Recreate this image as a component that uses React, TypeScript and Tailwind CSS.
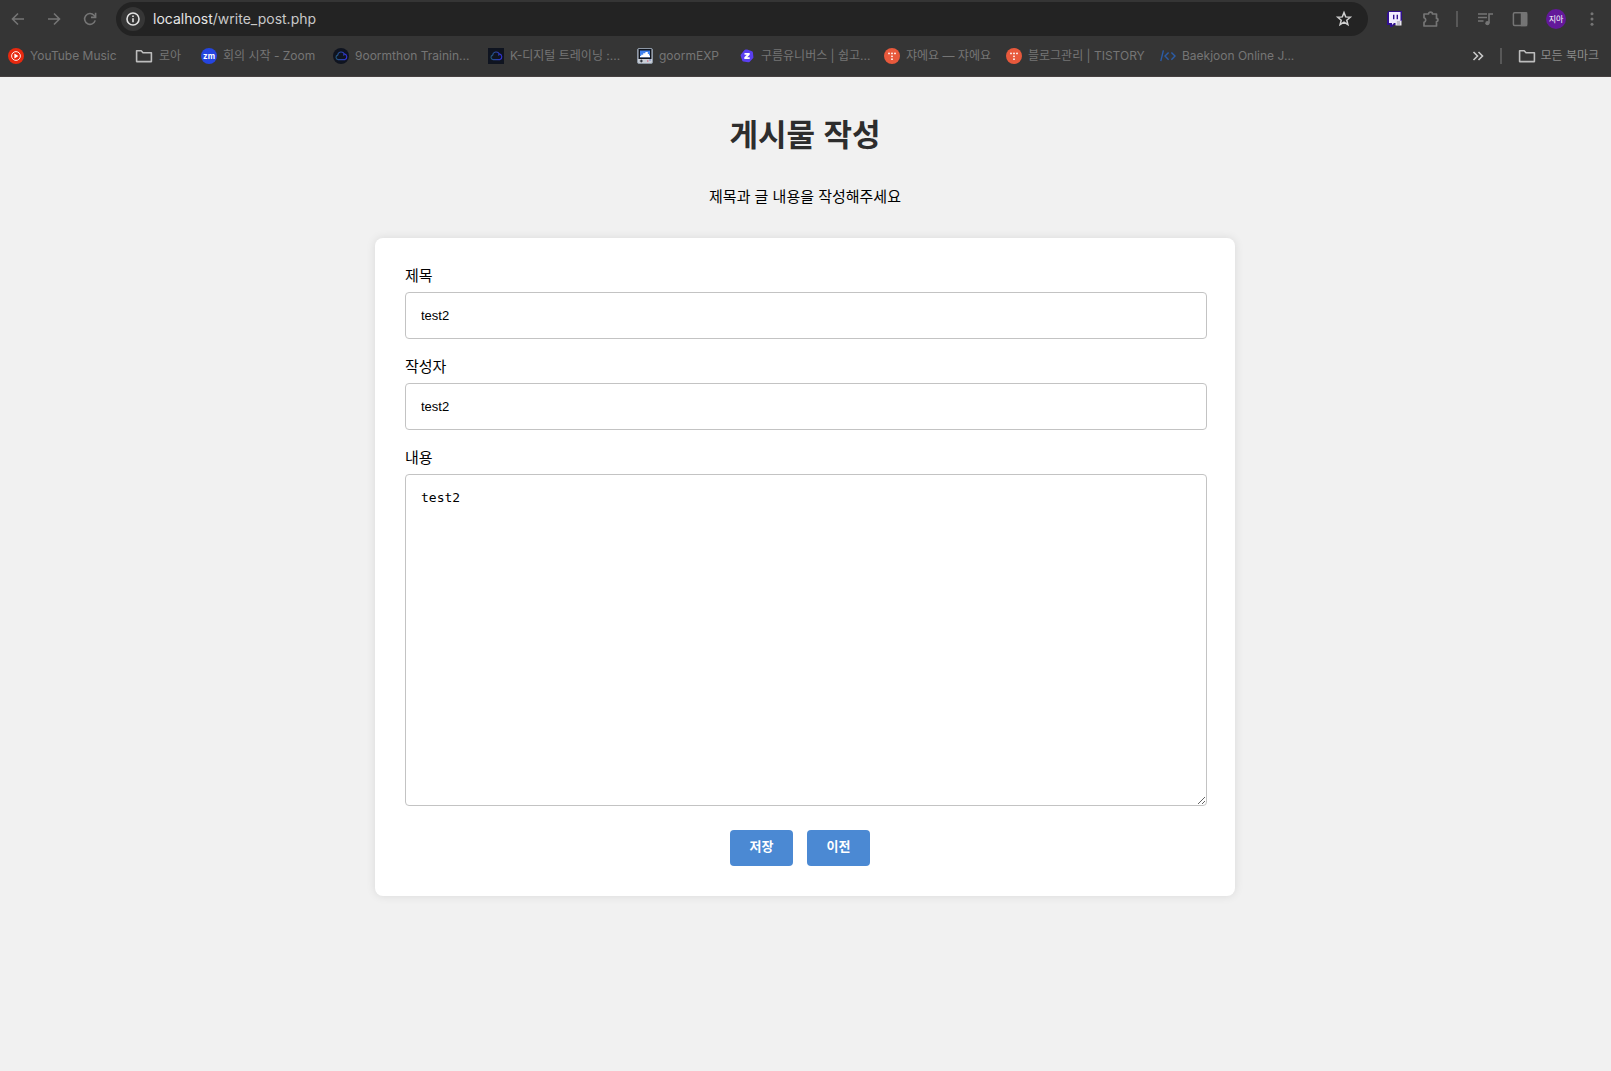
import type { ReactNode } from "react";

const uiFont = 'font-[Inter,"Noto_Sans_CJK_KR",sans-serif]';

function BackIcon() {
  return (
    <svg viewBox="0 0 16 16" className="size-4" fill="none" stroke="currentColor" strokeWidth="1.6">
      <path d="M14 8H3M8 2.5 2.5 8 8 13.5" />
    </svg>
  );
}

function ForwardIcon() {
  return (
    <svg viewBox="0 0 16 16" className="size-4" fill="none" stroke="currentColor" strokeWidth="1.6">
      <path d="M2 8h11M8 2.5 13.5 8 8 13.5" />
    </svg>
  );
}

function ReloadIcon() {
  return (
    <svg viewBox="0 0 16 16" className="size-4" fill="none" stroke="currentColor" strokeWidth="1.6">
      <path d="M13.2 9.4A5.4 5.4 0 1 1 12 4.3L13.4 6" />
      <path d="M13.6 1.8v4.6H9" />
    </svg>
  );
}

function InfoIcon() {
  return (
    <svg viewBox="0 0 16 16" className="size-4" fill="none" stroke="#e3e3e3" strokeWidth="1.6">
      <circle cx="8" cy="8" r="6" />
      <path d="M8 7.2v4M8 4.4v1.7" />
    </svg>
  );
}

function StarIcon() {
  return (
    <svg viewBox="0 0 18 18" className="size-[18px]" fill="none" stroke="#d0d0d0" strokeWidth="1.5" strokeLinejoin="miter">
      <path d="m9 2.6 1.7 4.3 4.6.3-3.5 3 1.1 4.5L9 12.2l-3.9 2.5 1.1-4.5-3.5-3 4.6-.3z" />
    </svg>
  );
}

function TwitchIcon() {
  return (
    <svg viewBox="0 0 16 16" className="size-4">
      <path d="M1 2.5 2.5 0H16v10l-5 4H8l-2 2H4v-2H1z" fill="#31108f" />
      <path d="M3 1h11.5v8l-3 3H8l-2 2v-2H3z" fill="#f1edff" />
      <path d="M7 3.8h1.4v4.4H7zM10.6 3.8H12v4.4h-1.4z" fill="#31108f" />
      <path d="M9.5 9.5h6v5h-6z" fill="#e8e6ee" />
      <path d="M11 11h3M11 13h3" stroke="#9b96ad" />
    </svg>
  );
}

function PuzzleIcon() {
  return (
    <svg viewBox="0 0 18 18" className="size-[18px]" fill="none" stroke="currentColor" strokeWidth="1.7" strokeLinejoin="round">
      <path d="M2 4h4.5a2 1.9 0 0 1 4 0H14.5v4.4a1.5 1.6 0 0 1 0 3.2V16H2v-3.6a2.4 2.4 0 0 0 0-4.6z" />
    </svg>
  );
}

function QueueIcon() {
  return (
    <svg viewBox="0 0 18 18" className="size-[18px]" fill="none" stroke="currentColor" strokeWidth="1.6">
      <path d="M2 4h9M2 7.5h9M2 11h5.5M13 13V4h4" />
      <circle cx="11.4" cy="13.2" r="2.1" fill="currentColor" stroke="none" />
    </svg>
  );
}

function SidePanelIcon() {
  return (
    <svg viewBox="0 0 16 16" className="size-4" fill="none" stroke="currentColor" strokeWidth="1.5">
      <rect x="1.4" y="1.8" width="13.2" height="12.6" rx="1.2" />
      <path d="M9.5 2h5v12.4h-5z" fill="currentColor" />
    </svg>
  );
}

function MoreIcon() {
  return (
    <svg viewBox="0 0 16 16" className="size-4" fill="currentColor">
      <circle cx="8" cy="2.8" r="1.5" />
      <circle cx="8" cy="8" r="1.5" />
      <circle cx="8" cy="13.2" r="1.5" />
    </svg>
  );
}

function FolderIcon() {
  return (
    <svg viewBox="0 0 18 16" className="h-4 w-[18px]" fill="none" stroke="#bdbdbd" strokeWidth="1.6" strokeLinejoin="round">
      <path d="M1.6 2.8h4.6l1.8 2h8.4v8.8H1.6z" />
    </svg>
  );
}

function YouTubeMusicIcon() {
  return (
    <svg viewBox="0 0 16 16" className="size-4">
      <circle cx="8" cy="8" r="8" fill="#e8290f" />
      <circle cx="8" cy="8" r="4.4" fill="none" stroke="#fff" strokeWidth="0.9" />
      <path d="M6.4 5.6 10.4 8l-4 2.4z" fill="#fff" />
    </svg>
  );
}

function ZoomIcon() {
  return (
    <span className="flex size-4 items-center justify-center rounded-full bg-[#2545e0] text-[8px] leading-none font-bold text-white">
      zm
    </span>
  );
}

function CloudIcon({ round }: { round?: boolean }) {
  return (
    <svg viewBox="0 0 16 16" className="size-4" fill="none">
      <defs>
        <linearGradient id="cloud" x1="0" x2="1">
          <stop offset="0" stopColor="#235878" />
          <stop offset="1" stopColor="#3230d8" />
        </linearGradient>
      </defs>
      <rect width="16" height="16" rx={round ? 8 : 0} fill="#0f1420" />
      <path
        d="M5 11.6a2.3 2.3 0 0 1-.3-4.5 3.5 3.5 0 0 1 6.6-1.2 3 3 0 0 1 .7 5.7H5M11 5.6l-.4 2"
        stroke="url(#cloud)"
        strokeWidth="1.1"
      />
    </svg>
  );
}

function GoormExpIcon() {
  return (
    <svg viewBox="0 0 16 16" className="size-4">
      <rect x="0.5" y="0.5" width="15" height="15" rx="1.5" fill="#c9ced6" stroke="#8d97a5" />
      <path d="M1.5 1h13v10h-13z" fill="#10151f" />
      <path d="M3 2.5h10v6.8H3z" fill="#3f82f0" />
      <path d="M3 9.3V8h1.2V6.8h2V5.2h2.2V4h2.4v2H12v1.5h1v1.8z" fill="#fff" />
      <path d="M2.8 13h3M4.3 11.6v2.8" stroke="#20242c" />
      <path d="M10 13h1.4" stroke="#d34060" />
      <path d="M12.4 12h1.3" stroke="#4060d0" />
    </svg>
  );
}

function ZepIcon() {
  return (
    <svg viewBox="0 0 16 16" className="size-4">
      <path
        d="M8.2 1.4 13 3.2a1.5 1.5 0 0 1 .9 1.2l.5 4.6a1.6 1.6 0 0 1-.4 1.3l-3.5 3.6a1.6 1.6 0 0 1-1.4.4l-4.7-.8a1.6 1.6 0 0 1-1.2-1L1.7 8a1.6 1.6 0 0 1 .2-1.4l3.4-4.4a1.8 1.8 0 0 1 1.6-.8z"
        fill="#5a3ff0"
      />
      <path d="M5.5 5h5.2v1.7L8.2 9.3h2.5V11H5.3V9.3l2.5-2.6H5.5z" fill="#fff" />
    </svg>
  );
}

function TistoryIcon() {
  return (
    <svg viewBox="0 0 16 16" className="size-4">
      <circle cx="8" cy="8" r="8" fill="#e8593c" />
      <g fill="#fff">
        <circle cx="5" cy="5.4" r="0.9" />
        <circle cx="8" cy="5.4" r="0.9" />
        <circle cx="11" cy="5.4" r="0.9" />
        <circle cx="8" cy="8.3" r="0.9" />
        <circle cx="8" cy="11.2" r="0.9" />
      </g>
    </svg>
  );
}

function BaekjoonIcon() {
  return (
    <svg viewBox="0 0 16 16" className="size-4" fill="none" stroke="#2b5ca6" strokeWidth="1.4">
      <path d="M3.4 2.4.8 13.2M8.6 4.4 5 8l3.6 3.8M11.4 4.4 15 8l-3.6 3.8" />
    </svg>
  );
}

type Bookmark = { label: string; icon: ReactNode; width: string };

const bookmarks: Bookmark[] = [
  { label: "YouTube Music", icon: <YouTubeMusicIcon />, width: "w-[127px]" },
  { label: "로아", icon: <FolderIcon />, width: "w-[66px]" },
  { label: "회의 시작 - Zoom", icon: <ZoomIcon />, width: "w-[132px]" },
  { label: "9oormthon Trainin...", icon: <CloudIcon round />, width: "w-[155px]" },
  { label: "K-디지털 트레이닝 :...", icon: <CloudIcon />, width: "w-[149px]" },
  { label: "goormEXP", icon: <GoormExpIcon />, width: "w-[102px]" },
  { label: "구름유니버스 | 쉽고...", icon: <ZepIcon />, width: "w-[145px]" },
  { label: "쟈에요 — 쟈에요", icon: <TistoryIcon />, width: "w-[122px]" },
  { label: "블로그관리 | TISTORY", icon: <TistoryIcon />, width: "w-[154px]" },
  { label: "Baekjoon Online J...", icon: <BaekjoonIcon />, width: "w-[134px]" },
];

function BrowserBar() {
  return (
    <header className={`${uiFont} border-b border-[#454040] bg-[#353535] pt-0.5 text-[#757575]`}>
      <div className="flex h-[34px] items-center">
        <div className="flex w-[116px] items-center gap-5 pl-2.5">
          <button type="button" aria-label="Back"><BackIcon /></button>
          <button type="button" aria-label="Forward"><ForwardIcon /></button>
          <button type="button" aria-label="Reload"><ReloadIcon /></button>
        </div>
        <div className="flex h-full min-w-0 flex-1 items-center gap-2 rounded-full bg-[#232323] pr-[15px] pl-[5px]">
          <button type="button" aria-label="Site information" className="flex size-6 items-center justify-center rounded-full bg-[#363636]">
            <InfoIcon />
          </button>
          <p className="flex-1 text-sm text-[#c9c9c9]">
            <span className="text-[#e6e6e6]">localhost</span>/write_post.php
          </p>
          <button type="button" aria-label="Bookmark this page"><StarIcon /></button>
        </div>
        <div className="flex items-center pr-[11px] pl-[18px]">
          <button type="button" aria-label="Twitch extension"><TwitchIcon /></button>
          <button type="button" aria-label="Extensions" className="ml-5"><PuzzleIcon /></button>
          <span className="ml-4 h-4 w-0.5 bg-[#585858]" />
          <button type="button" aria-label="Media controls" className="ml-[18px]"><QueueIcon /></button>
          <button type="button" aria-label="Side panel" className="ml-[18px]"><SidePanelIcon /></button>
          <button type="button" aria-label="Profile" className="ml-[18px] flex size-5 items-center justify-center rounded-full bg-[#63189a] text-[8px] text-white">
            지아
          </button>
          <button type="button" aria-label="Menu" className="ml-[18px]"><MoreIcon /></button>
        </div>
      </div>
      <nav className="flex h-10 items-center pr-3 pl-2 text-xs whitespace-nowrap">
        {bookmarks.map((b) => (
          <a key={b.label} href="#" className={`${b.width} flex shrink-0 items-center gap-1.5`}>
            <span className="shrink-0">{b.icon}</span>
            {b.label}
          </a>
        ))}
        <button type="button" aria-label="More bookmarks" className="ml-auto">
          <svg viewBox="0 0 12 12" className="size-3" fill="none" stroke="#c8c8c8" strokeWidth="1.6">
            <path d="m1.5 2 4 4-4 4M6.5 2l4 4-4 4" />
          </svg>
        </button>
        <span className="mr-4 ml-4 h-4 w-0.5 bg-[#585858]" />
        <button type="button" className="flex items-center gap-1 text-[#8b8b8b]">
          <FolderIcon />
          모든 북마크
        </button>
      </nav>
    </header>
  );
}

export default function App() {
  return (
    <div className="flex min-h-screen flex-col bg-[#f1f1f1]">
      <BrowserBar />
      <main className={`font-["Liberation_Sans","Noto_Sans_CJK_KR",sans-serif] flex-1 pr-[17px] pl-4 text-black`}>
        <h1 className="mt-9 text-center text-[31px] leading-[46px] font-bold text-[#2d2d2d]">게시물 작성</h1>
        <p className="mt-[26px] text-center text-[15px] leading-6">제목과 글 내용을 작성해주세요</p>
        <form
          className="mx-auto mt-[29px] max-w-[860px] rounded-lg bg-white py-[30px] pr-7 pl-[30px] shadow-[0_0_10px_rgba(0,0,0,0.1)]"
          onSubmit={(e) => e.preventDefault()}
        >
          <label htmlFor="title" className="block h-6 text-[15px] leading-4">제목</label>
          <input id="title" defaultValue="test2" className="block h-[47px] w-full rounded border border-[#c3c3c3] bg-white px-[15px] text-[13px]" />
          <label htmlFor="writer" className="mt-5 block h-6 text-[15px] leading-4">작성자</label>
          <input id="writer" defaultValue="test2" className="block h-[47px] w-full rounded border border-[#c3c3c3] bg-white px-[15px] text-[13px]" />
          <label htmlFor="content" className="mt-5 block h-6 text-[15px] leading-4">내용</label>
          <textarea
            id="content"
            defaultValue="test2"
            className='block h-[332px] w-full resize rounded border border-[#c3c3c3] bg-white p-[15px] font-["DejaVu_Sans_Mono",monospace] text-[13px] leading-[15px]'
          />
          <div className="mt-6 flex justify-center gap-3.5 pr-3">
            <button type="submit" className="flex h-9 w-[63px] justify-center rounded bg-[#4b89d3] pt-2 text-[13px] leading-[18px] font-bold text-white">저장</button>
            <button type="button" className="flex h-9 w-[63px] justify-center rounded bg-[#4b89d3] pt-2 text-[13px] leading-[18px] font-bold text-white">이전</button>
          </div>
        </form>
      </main>
    </div>
  );
}
